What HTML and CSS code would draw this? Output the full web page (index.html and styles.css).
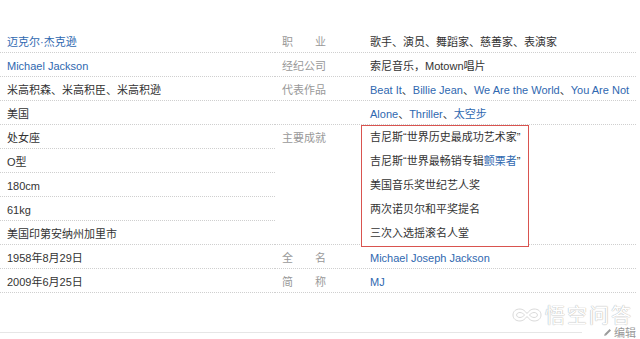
FILE: index.html
```html
<!DOCTYPE html>
<html lang="zh-CN">
<head>
<meta charset="utf-8">
<title>迈克尔·杰克逊</title>
<link rel="stylesheet" href="styles.css">
</head>
<body>
<div class="card">
  <div class="info">
    <div class="col col-left">
      <div class="row"><a class="link" href="#">迈克尔·杰克逊</a></div>
      <div class="row"><a class="link" href="#">Michael Jackson</a></div>
      <div class="row">米高积森、米高积臣、米高积逊</div>
      <div class="row">美国</div>
      <div class="row">处女座</div>
      <div class="row">O型</div>
      <div class="row">180cm</div>
      <div class="row">61kg</div>
      <div class="row">美国印第安纳州加里市</div>
      <div class="row">1958年8月29日</div>
      <div class="row">2009年6月25日</div>
    </div>
    <div class="col col-right">
      <div class="row"><span class="label spread">职业</span><span class="value">歌手、演员、舞蹈家、慈善家、表演家</span></div>
      <div class="row"><span class="label">经纪公司</span><span class="value">索尼音乐，Motown唱片</span></div>
      <div class="row"><span class="label">代表作品</span><span class="value"><a class="link" href="#">Beat It</a>、<a class="link" href="#">Billie Jean</a>、<a class="link" href="#">We Are the World</a>、<a class="link" href="#">You Are Not</a></span></div>
      <div class="row"><span class="label"></span><span class="value"><a class="link" href="#">Alone</a>、<a class="link" href="#">Thriller</a>、<a class="link" href="#">太空步</a></span></div>
      <div class="row row-tall"><span class="label">主要成就</span>
        <div class="highlight">
          <div class="hl-line">吉尼斯“世界历史最成功艺术家”</div>
          <div class="hl-line">吉尼斯“世界最畅销专辑<a class="link" href="#">颤栗者</a>”</div>
          <div class="hl-line">美国音乐奖世纪艺人奖</div>
          <div class="hl-line">两次诺贝尔和平奖提名</div>
          <div class="hl-line">三次入选摇滚名人堂</div>
        </div>
      </div>
      <div class="row"><span class="label spread">全名</span><span class="value"><a class="link" href="#">Michael Joseph Jackson</a></span></div>
      <div class="row"><span class="label spread">简称</span><span class="value"><a class="link" href="#">MJ</a></span></div>
    </div>
  </div>
  <div class="footer">
    <div class="rule"></div>
    <a class="edit" href="#"><svg class="pencil" width="9" height="9" viewBox="0 0 9 9"><path d="M1 8 L1.6 6 L6.6 1 L8 2.4 L3 7.4 Z" fill="#9a9a9a"/><path d="M1 8 L1.6 6 L3 7.4 Z" fill="#d0d0d0"/></svg>编辑</a>
  </div>
  <div class="watermark">
    <svg class="wm-logo" width="30" height="16" viewBox="0 0 30 16"><path d="M8 2 C3.5 2 1 4.5 1 8 C1 11.5 3.5 14 8 14 C11 14 13 12 15 9.5 C17 12 19 14 22 14 C26.5 14 29 11.5 29 8 C29 4.5 26.5 2 22 2 C19 2 17 4 15 6.5 C13 4 11 2 8 2 Z M8 5.5 C10 5.5 11.5 7 12.6 8 C11.5 9 10 10.5 8 10.5 C6 10.5 4.6 9.5 4.6 8 C4.6 6.5 6 5.5 8 5.5 Z M22 5.5 C24 5.5 25.4 6.5 25.4 8 C25.4 9.5 24 10.5 22 10.5 C20 10.5 18.5 9 17.4 8 C18.5 7 20 5.5 22 5.5 Z" fill="#ffffff" stroke="#cfcfcf" stroke-width="0.8"/></svg>
    <span class="wm-text">悟空问答</span>
  </div>
</div>
</body>
</html>
```
FILE: styles.css
```css
* { box-sizing: border-box; }
html, body { margin: 0; padding: 0; background: #fff; }
body {
  font-family: "Liberation Sans", Arial, "Noto Sans CJK SC", sans-serif;
  font-size: 11px;
  color: #333;
}
.card {
  position: relative;
  width: 640px;
  height: 339px;
  padding-top: 29px;
}
.info {
  display: flex;
  width: 636px;
}
.col-left { width: 275px; }
.col-right { width: 361px; }
.row {
  height: 24px;
  padding-top: 3px;
  line-height: 20px;
  border-bottom: 1px dotted #cfcfcf;
  white-space: nowrap;
}
.col-left .row { padding-left: 7px; }
.col-right .row {
  display: flex;
  padding-left: 7px;
}
.label {
  width: 88px;
  flex: none;
  color: #999;
}
.spread {
  display: inline-block;
  width: 44px;
  margin-right: 44px;
  text-align: justify;
  text-align-last: justify;
}
.value { color: #333; }
.link { color: #2f68b0; text-decoration: none; }
.row-tall {
  height: 120px;
}
.highlight {
  position: relative;
  margin-top: -3px;
  margin-left: -9px;
  width: 168px;
  height: 122px;
  border: 1px solid #d9534f;
  background: #fff;
  padding-left: 8px;
}
.hl-line {
  height: 24px;
  line-height: 22px;
  color: #333;
}
.footer {
  display: flex;
  align-items: center;
  height: 12px;
  margin-top: 33px;
  width: 636px;
}
.rule {
  flex: none;
  width: 582px;
  border-top: 1px solid #e6e6e6;
}
.edit {
  margin-left: auto;
  display: flex;
  align-items: center;
  gap: 2px;
  color: #999;
  font-family: "Noto Sans CJK SC", sans-serif;
  font-size: 11px;
  line-height: 12px;
  text-decoration: none;
}
.watermark {
  position: absolute;
  left: 512px;
  top: 305px;
  display: flex;
  align-items: center;
  gap: 3px;
}
.wm-text {
  font-family: "Noto Sans CJK SC", sans-serif;
  font-size: 20px;
  line-height: 20px;
  color: #fff;
  letter-spacing: 2px;
  text-shadow: 0 0 1px #b5b5b5, 0 0 1px #b5b5b5;
}
```
